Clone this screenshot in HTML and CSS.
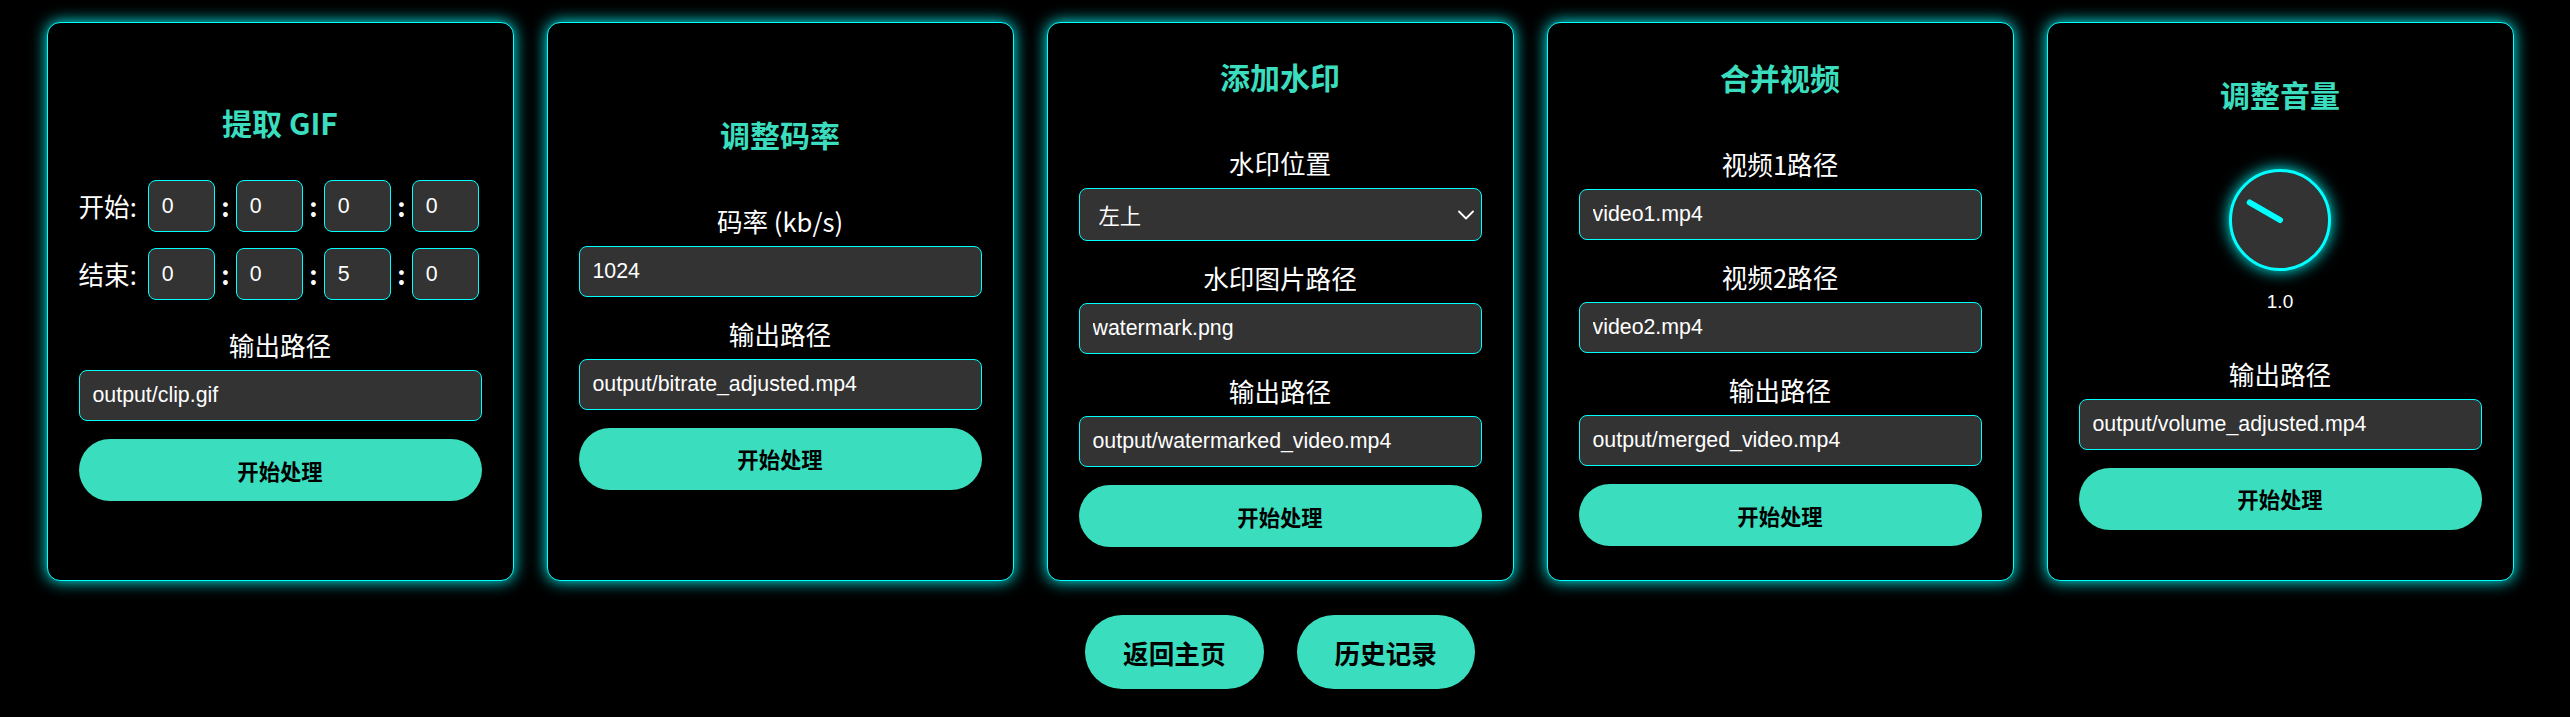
FILE: index.html
```html
<!DOCTYPE html>
<html lang="zh-CN">
<head>
<meta charset="utf-8">
<title>视频工具</title>
<link rel="stylesheet" href="styles.css">
</head>
<body>
<div class="page">
  <div class="cards">
    <section class="card">
      <h3 class="card-title">提取 GIF</h3>
      <div class="time-row">
        <span class="time-label">开始:</span>
        <input class="time-input" type="text" value="0">
        <span class="colon">:</span>
        <input class="time-input" type="text" value="0">
        <span class="colon">:</span>
        <input class="time-input" type="text" value="0">
        <span class="colon">:</span>
        <input class="time-input" type="text" value="0">
      </div>
      <div class="time-row">
        <span class="time-label">结束:</span>
        <input class="time-input" type="text" value="0">
        <span class="colon">:</span>
        <input class="time-input" type="text" value="0">
        <span class="colon">:</span>
        <input class="time-input" type="text" value="5">
        <span class="colon">:</span>
        <input class="time-input" type="text" value="0">
      </div>
      <div class="group">
        <label class="field-label">输出路径</label>
        <input class="field" type="text" value="output/clip.gif">
      </div>
      <button class="btn">开始处理</button>
    </section>

    <section class="card">
      <h3 class="card-title">调整码率</h3>
      <div class="group">
        <label class="field-label">码率 (kb/s)</label>
        <input class="field" type="text" value="1024">
      </div>
      <div class="group">
        <label class="field-label">输出路径</label>
        <input class="field" type="text" value="output/bitrate_adjusted.mp4">
      </div>
      <button class="btn">开始处理</button>
    </section>

    <section class="card">
      <h3 class="card-title">添加水印</h3>
      <div class="group">
        <label class="field-label">水印位置</label>
        <div class="select-wrap">
          <select class="select">
            <option>左上</option>
            <option>右上</option>
            <option>左下</option>
            <option>右下</option>
          </select>
          <svg class="chevron" width="16" height="10" viewBox="0 0 16 10"><polyline points="1,1.5 8,8.5 15,1.5" fill="none" stroke="#ffffff" stroke-width="1.8" stroke-linecap="round" stroke-linejoin="round"/></svg>
        </div>
      </div>
      <div class="group">
        <label class="field-label">水印图片路径</label>
        <input class="field" type="text" value="watermark.png">
      </div>
      <div class="group">
        <label class="field-label">输出路径</label>
        <input class="field" type="text" value="output/watermarked_video.mp4">
      </div>
      <button class="btn">开始处理</button>
    </section>

    <section class="card">
      <h3 class="card-title">合并视频</h3>
      <div class="group">
        <label class="field-label">视频1路径</label>
        <input class="field" type="text" value="video1.mp4">
      </div>
      <div class="group">
        <label class="field-label">视频2路径</label>
        <input class="field" type="text" value="video2.mp4">
      </div>
      <div class="group">
        <label class="field-label">输出路径</label>
        <input class="field" type="text" value="output/merged_video.mp4">
      </div>
      <button class="btn">开始处理</button>
    </section>

    <section class="card">
      <h3 class="card-title">调整音量</h3>
      <div class="knob-wrap">
        <div class="knob"><div class="knob-needle"></div></div>
        <span class="knob-value">1.0</span>
      </div>
      <div class="group">
        <label class="field-label">输出路径</label>
        <input class="field" type="text" value="output/volume_adjusted.mp4">
      </div>
      <button class="btn">开始处理</button>
    </section>
  </div>

  <div class="actions">
    <button class="nav-btn">返回主页</button>
    <button class="nav-btn">历史记录</button>
  </div>
</div>
</body>
</html>
```

FILE: styles.css
```css
html, body {
  margin: 0;
  padding: 0;
  background: #000;
}

body {
  font-family: "Noto Sans CJK SC", "Liberation Sans", sans-serif;
  color: #fff;
}

.page {
  width: 2560px;
  padding-top: 22px;
}

.cards {
  display: flex;
  justify-content: center;
  gap: 33px;
}

.card {
  box-sizing: border-box;
  width: 467px;
  min-height: 559px;
  border: 1px solid #00ffff;
  border-radius: 13px;
  box-shadow: 0 0 16px #00ffff;
  background: #000;
  padding: 32px 31px;
  display: flex;
  flex-direction: column;
  justify-content: center;
}

.card-title {
  margin: 0 0 30px;
  font-size: 30px;
  line-height: 40px;
  font-weight: 700;
  color: #3adebe;
  text-align: center;
}

.group {
  margin-top: 20px;
  display: flex;
  flex-direction: column;
}

.field-label {
  display: block;
  font-size: 25.6px;
  line-height: 34px;
  margin-bottom: 8px;
  text-align: center;
  color: #fff;
}

.field,
.time-input,
.select {
  box-sizing: border-box;
  background: #333;
  border: 1px solid #00ffff;
  border-radius: 8px;
  color: #fff;
  font-family: "Liberation Sans", "Noto Sans CJK SC", sans-serif;
  font-size: 21.33px;
  outline: none;
}

.field {
  width: 100%;
  height: 51px;
  padding: 0 13px;
}

.time-row {
  display: flex;
  align-items: center;
  margin: 8px 0;
}

.time-label {
  font-size: 25.6px;
  line-height: 34px;
  margin-right: 11px;
  white-space: nowrap;
}

.time-input {
  width: 67px;
  height: 52px;
  padding: 0 13px;
  flex: none;
}

.colon {
  width: 21px;
  flex: none;
  text-align: center;
  font-size: 25.6px;
  line-height: 34px;
  font-weight: 700;
}

.select-wrap {
  position: relative;
}

.select {
  width: 100%;
  height: 53px;
  padding: 0 19px;
  appearance: none;
  -webkit-appearance: none;
  font-family: "Noto Sans CJK SC", sans-serif;
}

.chevron {
  position: absolute;
  right: 8px;
  top: 50%;
  transform: translateY(-50%);
  pointer-events: none;
}

.btn {
  margin-top: 18px;
  width: 100%;
  height: 62px;
  border: none;
  border-radius: 40px;
  background: #3adebe;
  color: #000;
  font-family: "Noto Sans CJK SC", sans-serif;
  font-size: 21.33px;
  font-weight: 700;
  cursor: pointer;
}

.knob-wrap {
  margin: 25px 0 24px;
  display: flex;
  flex-direction: column;
  align-items: center;
  gap: 20px;
}

.knob {
  position: relative;
  box-sizing: border-box;
  width: 102px;
  height: 102px;
  border-radius: 50%;
  border: 3px solid #00ffff;
  background: #333;
  box-shadow: 0 0 16px #00ffff;
}

.knob-needle {
  position: absolute;
  left: calc(50% - 3px);
  bottom: calc(50% - 3px);
  width: 6px;
  height: 41px;
  border-radius: 3px;
  background: #00ffff;
  transform-origin: 3px 38px;
  transform: rotate(-60deg);
}

.knob-value {
  font-family: "Liberation Sans", sans-serif;
  font-size: 19px;
  line-height: 22px;
  color: #fff;
}

.actions {
  display: flex;
  justify-content: center;
  gap: 33px;
  margin-top: 34px;
}

.nav-btn {
  height: 74px;
  padding: 0 38px;
  border: none;
  border-radius: 40px;
  background: #3adebe;
  color: #000;
  font-family: "Noto Sans CJK SC", sans-serif;
  font-size: 25.6px;
  font-weight: 700;
  cursor: pointer;
}
```
